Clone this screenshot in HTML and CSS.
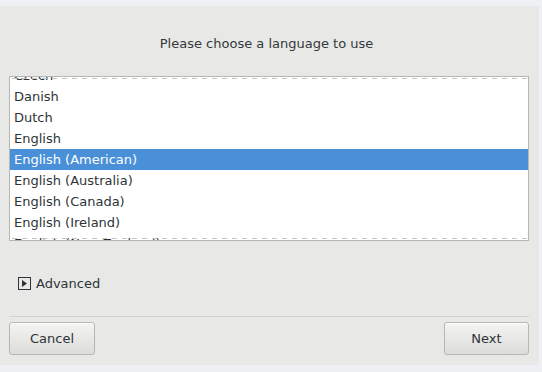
FILE: index.html
```html
<html lang="en">
	<head>
		<meta charset="utf-8">
		<meta name="viewport" content="width=device-width, initial-scale=1">
		<title>Language</title>
		<link rel="stylesheet" href="styles.css">
	</head>
	<body>
		<!-- dialog -->
		<div class="dialog-window">
			<div class="dialog-title">Please choose a language to use</div>

			<div class="language-list-box">
				<ul class="language-list" role="listbox">
					<li class="language-item">Czech</li>
					<li class="language-item">Danish</li>
					<li class="language-item">Dutch</li>
					<li class="language-item">English</li>
					<li class="language-item selected">English (American)</li>
					<li class="language-item">English (Australia)</li>
					<li class="language-item">English (Canada)</li>
					<li class="language-item">English (Ireland)</li>
					<li class="language-item">English (New Zealand)</li>
				</ul>
			</div>

			<div class="expander-row">
				<svg class="expander-icon" viewBox="0 0 13 13" width="13" height="13">
					<rect x="0.5" y="0.5" width="12" height="12" fill="none" stroke="#2e3436"/>
					<polygon points="4,3 9,6.5 4,10" fill="#2e3436"/>
				</svg>
				<span class="expander-label">Advanced</span>
			</div>

			<div class="dialog-separator"></div>

			<div class="dialog-buttons">
				<button class="dialog-button button-cancel">Cancel</button>
				<button class="dialog-button button-next">Next</button>
			</div>
		</div>
		<!-- .dialog -->
	</body>
</html>
```

FILE: styles.css
```css
body {
	margin: 0;
	background-color: #eef0f4;
	font-family: "DejaVu Sans", sans-serif;
	font-size: 13px;
	color: #2e3436;
}

.dialog-window {
	margin-top: 6px;
	width: 539px;
	height: 359px;
	box-sizing: border-box;
	padding: 0 10px 0 9px;
	background-color: #e8e8e7;
	display: flex;
	flex-direction: column;
}

.dialog-title {
	margin-top: 30px;
	height: 16px;
	line-height: 16px;
	text-align: center;
	padding-right: 5px;
	color: #33393b;
	margin-bottom: 24px;
}

.language-list-box {
	position: relative;
	height: 165px;
	box-sizing: border-box;
	border: 1px solid #b6b6b3;
	background-color: #fff;
	overflow: hidden;
}

/* undershoot dashes */
.language-list-box::before,
.language-list-box::after {
	content: "";
	position: absolute;
	left: 0;
	right: 0;
	height: 1px;
	background: repeating-linear-gradient(to right, #c4c4c2 0, #c4c4c2 5px, transparent 5px, transparent 10px);
	background-position: 2px 0;
}
.language-list-box::before {
	top: 1px;
}
.language-list-box::after {
	bottom: 1px;
}

.language-list {
	list-style: none;
	margin: -12px 0 0 0;
	padding: 0;
}

.language-item {
	height: 21px;
	line-height: 21px;
	padding-left: 4px;
	color: #2e3436;
	white-space: nowrap;
}

.language-item.selected {
	background-color: #4a90d9;
	color: #fff;
}

.expander-row {
	margin-top: 34px;
	height: 17px;
	display: flex;
	align-items: center;
	padding-left: 9px;
	gap: 5px;
}

.expander-icon {
	display: block;
}

.expander-label {
	line-height: 17px;
}

.dialog-separator {
	margin-top: 24px;
	height: 1px;
	background-color: #d3d3d0;
}

.dialog-buttons {
	margin-top: 5px;
	display: flex;
	justify-content: space-between;
}

.dialog-button {
	height: 33px;
	box-sizing: border-box;
	border: 1px solid #b6b6b3;
	border-radius: 3px;
	background: linear-gradient(to bottom, #f4f4f3, #dcdcda);
	font-family: "DejaVu Sans", sans-serif;
	font-size: 13px;
	color: #2e3436;
	padding: 0;
	box-shadow: inset 0 1px #fff;
}

.button-cancel {
	width: 86px;
}

.button-next {
	width: 85px;
}
```
